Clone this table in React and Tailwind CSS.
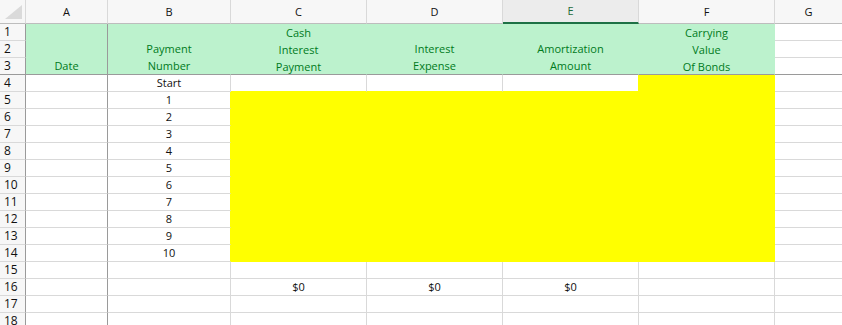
const font = { fontFamily: '"Open Sans", "Liberation Sans", sans-serif' };

function RowNum({ n, bottom = 'border-b-[#d9d9d9]' }) {
  return (
    <div className={`w-[26px] h-[17px] shrink-0 border-r border-b border-r-[#9a9a9a] ${bottom} bg-[#f7f7f7] pl-[4px] text-[12px] leading-[16px] text-[#111]`}>
      {n}
    </div>
  );
}

function Cell({ w, text, r = 'border-r-[#d9d9d9]', b = 'border-b-[#d9d9d9]', bg = 'bg-white' }) {
  return (
    <div className={`${w} h-[17px] shrink-0 border-r border-b ${r} ${b} ${bg} text-center text-[11px] leading-[16px] text-[#111]`}>
      {text}
    </div>
  );
}

function Tail() {
  return <div className="flex-1 h-[17px] border-b border-[#d9d9d9]" />;
}

const letters = [
  ['A', 'w-[82px]'],
  ['B', 'w-[123px]'],
  ['C', 'w-[136px]'],
  ['D', 'w-[136px]'],
  ['E', 'w-[136px]'],
  ['F', 'w-[136px]'],
];

const heads = [
  ['w-[82px]', 'border-r-[#9a9a9a]', ['', '', 'Date']],
  ['w-[123px]', 'border-r-[#bcf2cd]', ['', 'Payment', 'Number']],
  ['w-[136px]', 'border-r-[#bcf2cd]', ['Cash', 'Interest', 'Payment']],
  ['w-[136px]', 'border-r-[#bcf2cd]', ['', 'Interest', 'Expense']],
  ['w-[136px]', 'border-r-[#bcf2cd]', ['', 'Amortization', 'Amount']],
  ['w-[136px]', 'border-r-[#bcf2cd]', ['Carrying', 'Value', 'Of Bonds']],
];

export default function App() {
  const nums = [1, 2, 3, 4, 5, 6, 7, 8, 9, 10];

  return (
    <div className="w-[842px] h-[325px] overflow-hidden bg-white" style={font}>
      {/* column letters */}
      <div className="flex h-[24px]">
        <div className="w-[26px] h-[24px] shrink-0 border-r border-b border-r-[#d9d9d9] border-b-[#bdbdbd] bg-[#f7f7f7] flex items-end justify-end pr-[3px] pb-[4px]">
          <svg width="17" height="14" viewBox="0 0 17 14">
            <polygon points="17,0 17,14 0,14" fill="#dadada" />
          </svg>
        </div>
        {letters.map(([l, w]) =>
          l === 'E' ? (
            <div key={l} className={`${w} h-[24px] shrink-0 border-r border-b-2 border-r-[#d9d9d9] border-b-[#1e7145] bg-[#ececec] text-center text-[11px] leading-[22px] text-[#1e6b3a]`}>
              {l}
            </div>
          ) : (
            <div key={l} className={`${w} h-[24px] shrink-0 border-r border-b border-r-[#d9d9d9] border-b-[#bdbdbd] bg-[#f7f7f7] text-center text-[11px] leading-[23px] text-[#111]`}>
              {l}
            </div>
          )
        )}
        <div className="flex-1 h-[24px] border-b border-[#bdbdbd] bg-[#f7f7f7] text-center text-[11px] leading-[23px] text-[#111]">
          G
        </div>
      </div>

      {/* green header, rows 1-3 */}
      <div className="flex h-[51px]">
        <div className="w-[26px] shrink-0 flex flex-col">
          <RowNum n={1} />
          <RowNum n={2} />
          <RowNum n={3} bottom="border-b-[#9a9a9a]" />
        </div>
        {heads.map(([w, r, lines], i) => (
          <div key={i} className={`${w} h-[51px] shrink-0 border-r border-b ${r} border-b-[#9a9a9a] bg-[#bcf2cd] flex flex-col text-center text-[11px] text-[#007a1c]`}>
            {lines.map((t, j) => (
              <div key={j} className="h-[17px] leading-[17px]">{t}</div>
            ))}
          </div>
        ))}
        <div className="flex-1 flex flex-col">
          <div className="h-[17px] border-b border-[#d9d9d9]" />
          <div className="h-[17px] border-b border-[#d9d9d9]" />
          <div className="h-[17px] border-b border-[#9a9a9a]" />
        </div>
      </div>

      {/* row 4 */}
      <div className="flex">
        <RowNum n={4} />
        <Cell w="w-[82px]" r="border-r-[#9a9a9a]" />
        <Cell w="w-[123px]" text="Start" />
        <Cell w="w-[136px]" b="border-b-[#ffff00]" />
        <Cell w="w-[136px]" b="border-b-[#ffff00]" />
        <Cell w="w-[136px]" r="border-r-[#ffff00]" b="border-b-[#ffff00]" />
        <Cell w="w-[136px]" r="border-r-[#ffff00]" b="border-b-[#ffff00]" bg="bg-[#ffff00]" />
        <Tail />
      </div>

      {/* rows 5-14 */}
      {nums.map((n) => (
        <div key={n} className="flex">
          <RowNum n={n + 4} />
          <Cell w="w-[82px]" r="border-r-[#9a9a9a]" />
          <Cell w="w-[123px]" text={n} r="border-r-[#ffff00]" />
          <div className="w-[544px] h-[17px] shrink-0 bg-[#ffff00]" />
          <Tail />
        </div>
      ))}

      {/* rows 15-18 */}
      {[15, 16, 17, 18].map((n) => (
        <div key={n} className="flex">
          <RowNum n={n} />
          <Cell w="w-[82px]" r="border-r-[#9a9a9a]" />
          <Cell w="w-[123px]" />
          <Cell w="w-[136px]" text={n === 16 ? '$0' : ''} />
          <Cell w="w-[136px]" text={n === 16 ? '$0' : ''} />
          <Cell w="w-[136px]" text={n === 16 ? '$0' : ''} />
          <Cell w="w-[136px]" />
          <Tail />
        </div>
      ))}
    </div>
  );
}
